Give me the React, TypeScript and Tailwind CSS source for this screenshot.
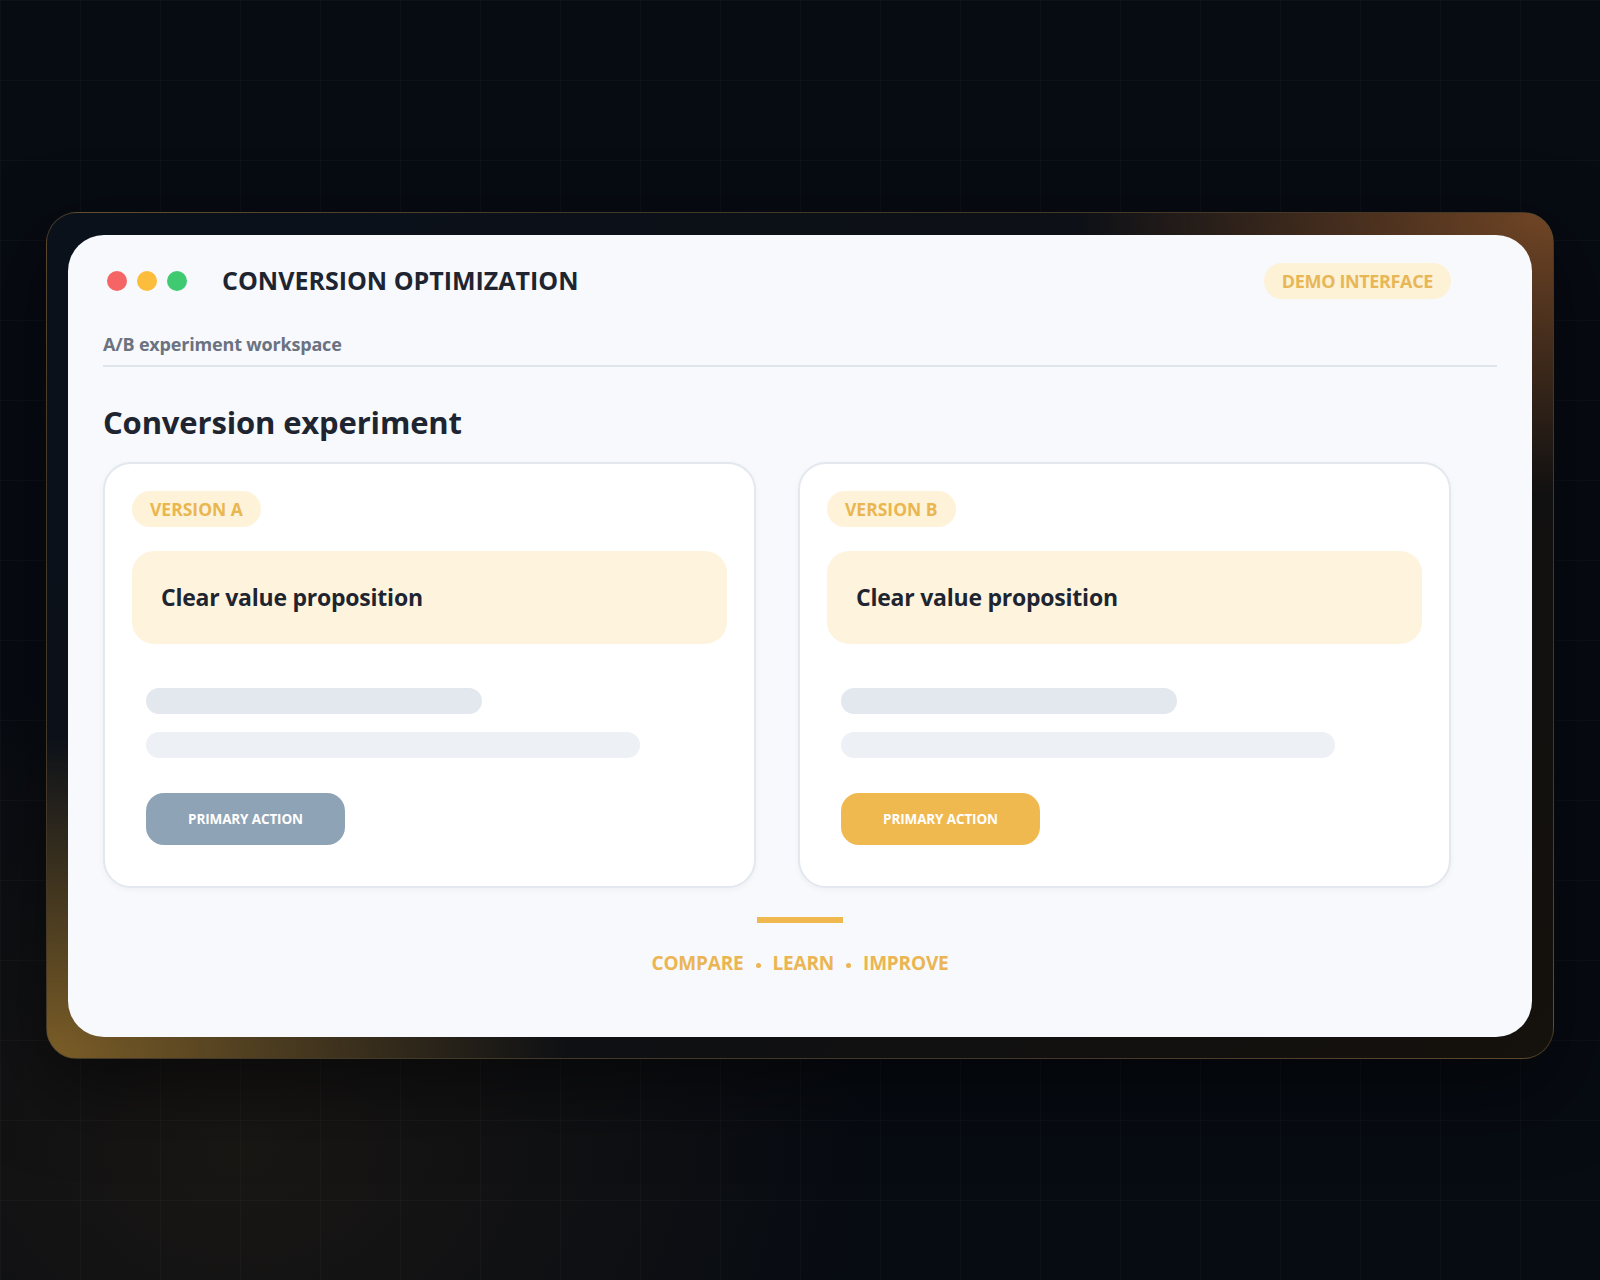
import React from 'react';

const font = { fontFamily: '"Open Sans", "Noto Sans", Arial, sans-serif' };

interface VariantProps {
  label: string;
  buttonClass: string;
}

const VariantCard: React.FC<VariantProps> = ({ label, buttonClass }) => (
  <div className="rounded-[28px] border-2 border-[#e3e8ef] bg-white p-[27px] shadow-[0_2px_6px_rgba(15,23,42,0.04)]">
    <span className="inline-flex h-[36px] items-center rounded-full bg-[#fef3d9] px-[18px] text-[17.5px] font-bold text-[#e9b650]">
      {label}
    </span>
    <div className="mt-[24px] flex h-[93px] items-center rounded-[22px] bg-[#fef4de] px-[29px]">
      <h3 className="text-[23px] font-bold tracking-[-0.01em] text-[#1e2530]">Clear value proposition</h3>
    </div>
    <div className="px-[14px] pb-[14px] pt-[44px]">
      <div className="h-[26px] w-[336px] rounded-full bg-[#e3e8ee]" />
      <div className="mt-[18px] h-[26px] w-[494px] rounded-full bg-[#edf0f4]" />
      <button
        className={`mt-[35px] flex h-[52px] w-[199px] items-center justify-center rounded-[18px] text-[13.5px] font-bold tracking-[-0.01em] text-white ${buttonClass}`}
      >
        PRIMARY ACTION
      </button>
    </div>
  </div>
);

export default function App() {
  return (
    <div
      className="min-h-screen bg-[#070b12] bg-[radial-gradient(ellipse_900px_700px_at_15%_90%,rgba(60,45,25,0.35),transparent_70%)]"
      style={font}
    >
      <div className="min-h-screen bg-[linear-gradient(rgba(255,255,255,0.022)_1px,transparent_1px),linear-gradient(90deg,rgba(255,255,255,0.022)_1px,transparent_1px)] bg-[size:80px_80px] pt-[212px]">
        {/* glowing frame */}
        <div className="mx-auto w-[1508px] rounded-[31px] border border-[#5a4a30]/70 bg-[#120f0c] bg-[radial-gradient(ellipse_680px_400px_at_100%_0%,rgba(118,72,38,0.95),transparent_70%),radial-gradient(ellipse_740px_460px_at_0%_100%,rgba(130,98,40,0.95),transparent_70%),linear-gradient(135deg,#0a111b_0%,#0d1016_45%,#15110c_100%)] px-[21px] pb-[21px] pt-[22px] shadow-[0_30px_80px_rgba(0,0,0,0.5)]">
          <div className="flex h-[802px] flex-col rounded-[36px] bg-[#f7f9fc] px-[35px] pt-[28px]">
            {/* header */}
            <div className="flex h-[36px] items-center justify-between pr-[46px]">
              <div className="flex items-center">
                <div className="ml-[4px] flex items-center gap-[10px]">
                  <span className="h-[20px] w-[20px] rounded-full bg-[#f56565]" />
                  <span className="h-[20px] w-[20px] rounded-full bg-[#fbbd3b]" />
                  <span className="h-[20px] w-[20px] rounded-full bg-[#3fca72]" />
                </div>
                <h1 className="ml-[35px] text-[25px] font-bold text-[#1e2530]">
                  CONVERSION OPTIMIZATION
                </h1>
              </div>
              <span className="inline-flex h-[36px] items-center rounded-full bg-[#fdf1d6] px-[18px] text-[18px] font-bold tracking-[-0.02em] text-[#e7b756]">
                DEMO INTERFACE
              </span>
            </div>

            <p className="mt-[33px] text-[18px] font-bold leading-[24px] tracking-[-0.01em] text-[#6b7280]">
              A/B experiment workspace
            </p>
            <div className="mt-[9px] h-[2px] bg-[#dfe5ec]" />

            <h2 className="mt-[35px] text-[31px] font-bold leading-[40px] tracking-[-0.005em] text-[#1e2530]">
              Conversion experiment
            </h2>

            <div className="mt-[20px] grid grid-cols-2 gap-[42px] pr-[46px]">
              <VariantCard label="VERSION A" buttonClass="bg-[#8fa3b6]" />
              <VariantCard label="VERSION B" buttonClass="bg-[#f0b94f]" />
            </div>

            <div className="mx-auto mt-[29px] h-[6px] w-[86px] bg-[#f0b94f]" />
            <div className="mt-[27px] flex items-center justify-center gap-[12px] text-[19px] font-bold leading-[26px] tracking-[-0.01em] text-[#eab552]">
              <span>COMPARE</span>
              <span className="h-[5px] w-[5px] translate-y-[2px] rounded-full bg-[#eab552]" />
              <span>LEARN</span>
              <span className="h-[5px] w-[5px] translate-y-[2px] rounded-full bg-[#eab552]" />
              <span>IMPROVE</span>
            </div>
          </div>
        </div>
      </div>
    </div>
  );
}
